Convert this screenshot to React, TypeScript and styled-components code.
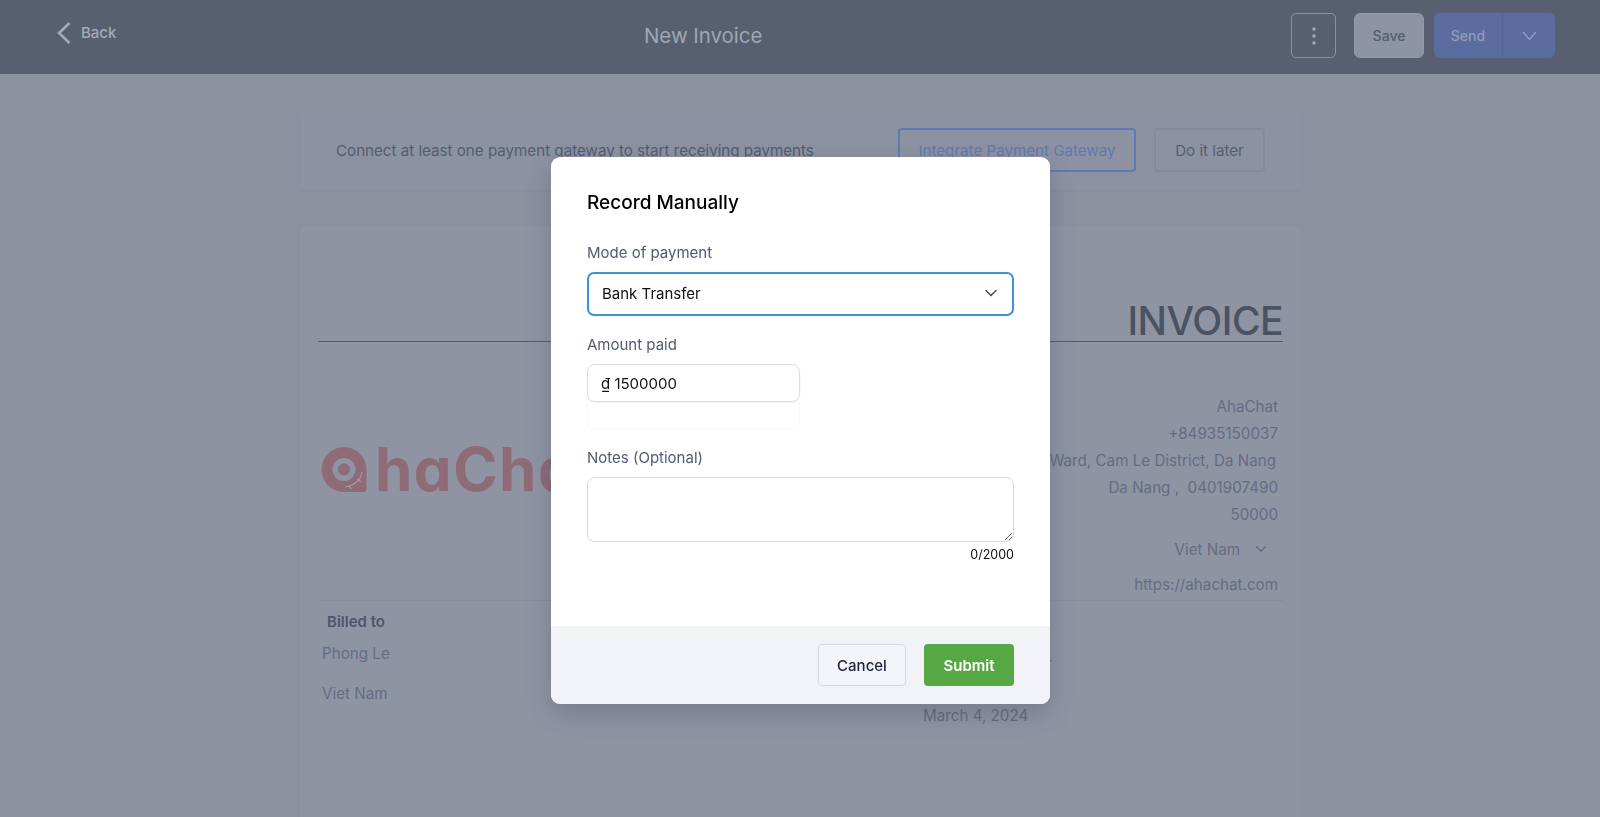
import styled, { createGlobalStyle } from 'styled-components'
import { ChevronDown } from 'lucide-react'

const GlobalStyle = createGlobalStyle`
  html, body {
    margin: 0;
    height: 100%;
    overflow: hidden;
    background: #8c91a0;
    font-family: Inter, "Liberation Sans", sans-serif;
  }
  * {
    box-sizing: border-box;
  }
`

const Page = styled.div`
  height: 817px;
  overflow: hidden;
`

const Header = styled.header`
  height: 74px;
  background: #575f71;
  display: flex;
  align-items: flex-start;
  justify-content: space-between;
  padding: 13px 45px 0 56px;
  position: relative;
`

const BackLink = styled.a`
  display: flex;
  align-items: center;
  gap: 10px;
  height: 40px;
  color: #a5aab6;
  font-size: 15px;
  font-weight: 500;
  line-height: 38px;
`

const PageTitle = styled.h1`
  position: absolute;
  left: 644px;
  top: 22px;
  margin: 0;
  color: #a0a6b3;
  font-size: 20.4px;
  font-weight: 400;
  line-height: 28px;
`

const HeaderActions = styled.div`
  display: flex;
  height: 45px;
`

const KebabButton = styled.button`
  width: 45px;
  height: 45px;
  margin-right: 18px;
  background: transparent;
  border: 1px solid #8a90a0;
  border-radius: 5px;
  display: flex;
  align-items: center;
  justify-content: center;
  padding: 0;
`

const SaveButton = styled.button`
  width: 70px;
  height: 45px;
  margin-right: 10px;
  border: 1px solid #9298a6;
  border-radius: 6px;
  background: #8e94a3;
  color: #555d70;
  font: 500 14px Inter, sans-serif;
`

const SendGroup = styled.div`
  width: 121px;
  height: 45px;
  display: flex;
  border-radius: 6px;
  background: #5b6ca0;
  color: #929cb9;
  font-size: 14px;
  font-weight: 500;
`

const SendLabel = styled.span`
  width: 69px;
  display: flex;
  align-items: center;
  justify-content: center;
  border-right: 1px solid #54659a;
`

const SendCaret = styled.span`
  flex: 1;
  display: flex;
  align-items: center;
  justify-content: center;
`

const Content = styled.main`
  width: 1001px;
  margin: 38px 0 0 300px;
`

const Banner = styled.section`
  height: 78px;
  display: flex;
  align-items: center;
  padding: 0 36px 2px;
  border-radius: 4px;
  background: #8c92a1;
  box-shadow: 0 1px 2px rgba(70, 76, 96, 0.08);
  color: #555c70;
  font-size: 15.15px;
`

const BannerText = styled.span`
  width: 562px;
`

const IntegrateButton = styled.button`
  width: 238px;
  height: 44px;
  margin-right: 18px;
  background: transparent;
  border: 2px solid #5f79b5;
  border-radius: 4px;
  color: #5f79b5;
  font: 400 15.15px Inter, sans-serif;
`

const LaterButton = styled.button`
  width: 111px;
  height: 44px;
  background: transparent;
  border: 2px solid #858a9a;
  border-radius: 4px;
  color: #585f72;
  font: 400 15.15px Inter, sans-serif;
`

const InvoiceCard = styled.section`
  height: 620px;
  margin-top: 36px;
  padding: 0 18px;
  border-radius: 4px;
  background: #8f94a3;
  box-shadow: 0 0 1px rgba(70, 76, 96, 0.2);
`

const InvoiceTitleRow = styled.div`
  height: 116px;
  display: flex;
  align-items: flex-end;
  justify-content: flex-end;
  border-bottom: 1px solid #565d6e;
`

const InvoiceTitle = styled.h2`
  margin: 0;
  color: #4b5262;
  font-size: 39px;
  font-weight: 500;
  line-height: 40px;
  letter-spacing: -0.5px;
`

const SenderRow = styled.div`
  height: 259px;
  display: flex;
  justify-content: space-between;
  border-bottom: 1px solid #888d9c;
`

const Logo = styled.div`
  display: flex;
  align-items: center;
  gap: 8px;
  height: 48px;
  margin: 103px 0 0 3px;
  color: #8f6a77;
  font-size: 60px;
  font-weight: 700;
  font-feature-settings: 'cv11';
  letter-spacing: 1.5px;
  line-height: 48px;
  white-space: nowrap;
`

const Address = styled.div`
  display: flex;
  flex-direction: column;
  align-items: flex-end;
  padding: 52px 5px 0 0;
  color: #656c81;
  font-size: 15.2px;
`

const AddressLine = styled.div<{ $inset?: number }>`
  height: 26.9px;
  line-height: 26.9px;
  padding-right: ${(props) => props.$inset ?? 0}px;
  white-space: nowrap;
`

const CountryLine = styled.div`
  display: flex;
  align-items: center;
  gap: 12px;
  height: 26px;
  margin-top: 8px;
  padding-right: 8px;
`

const WebsiteLine = styled.div`
  height: 26px;
  margin-top: 10px;
  line-height: 26px;
`

const BilledRow = styled.div`
  display: flex;
  padding-top: 11px;
`

const BilledColumn = styled.div`
  width: 605px;
  padding-left: 4px;
  color: #656c81;
  font-size: 15.2px;
`

const BilledHeading = styled.div`
  margin-left: 5px;
  color: #4f566a;
  font-size: 15px;
  font-weight: 600;
  line-height: 20px;
`

const BilledLine = styled.div<{ $gap: number }>`
  margin-top: ${(props) => props.$gap}px;
  line-height: 20px;
`

const MetaColumn = styled.div`
  width: 129px;
  color: #656c81;
  font-size: 15.2px;
`

const MetaNumber = styled.div`
  margin-top: 37px;
  line-height: 20px;
  text-align: right;
`

const MetaDate = styled.div`
  margin-top: 37px;
  line-height: 20px;
`

const Backdrop = styled.div`
  position: fixed;
  inset: 0;
  display: flex;
  justify-content: center;
  align-items: flex-start;
  padding: 157px 0 0 1px;
`

const Modal = styled.div`
  width: 499px;
  height: 547px;
  display: flex;
  flex-direction: column;
  overflow: hidden;
  background: #fff;
  border-radius: 9px;
  box-shadow: 0 10px 24px rgba(50, 56, 76, 0.25);
`

const ModalBody = styled.div`
  flex: 1;
  display: flex;
  flex-direction: column;
  padding: 34px 36px 0;
`

const ModalTitle = styled.h3`
  margin: 0;
  color: #000;
  font-size: 19px;
  font-weight: 500;
  line-height: 24px;
`

const FieldLabel = styled.label<{ $top: number }>`
  display: block;
  margin-top: ${(props) => props.$top}px;
  color: #505a76;
  font-size: 15px;
  line-height: 20px;
`

const SelectBox = styled.div`
  height: 44px;
  margin-top: 9px;
  display: flex;
  align-items: center;
  justify-content: space-between;
  padding: 0 11px 2px 13px;
  border: 2px solid #3b93dc;
  border-radius: 7px;
  color: #111;
  font-size: 15px;
`

const AmountBox = styled.div`
  width: 213px;
  height: 38px;
  margin-top: 9px;
  display: flex;
  align-items: center;
  padding: 0 13px;
  border: 1px solid #dcdce3;
  border-radius: 8px;
  box-shadow: 0 1px 2px rgba(60, 60, 90, 0.08);
  color: #111;
  font-size: 15px;
`

const AmountGhost = styled.div`
  width: 213px;
  height: 27px;
  border: 1px solid #f8f8fa;
  border-top: 0;
  border-radius: 0 0 6px 6px;
`

const NotesBox = styled.textarea`
  display: block;
  width: 100%;
  height: 65px;
  margin: 9px 0 0;
  border: 1px solid #d8d8e0;
  border-radius: 8px;
  background: #fff;
  outline: none;
`

const Counter = styled.div`
  margin-top: 5px;
  color: #111;
  font-size: 12.5px;
  line-height: 16px;
  text-align: right;
`

const ModalFooter = styled.div`
  height: 78px;
  display: flex;
  justify-content: flex-end;
  gap: 18px;
  padding: 18px 36px 0;
  background: #f2f3f7;
`

const CancelButton = styled.button`
  width: 88px;
  height: 42px;
  border: 1px solid #d8d9df;
  border-radius: 4px;
  background: #f4f5f8;
  color: #1b2140;
  font: 500 15px Inter, sans-serif;
`

const SubmitButton = styled.button`
  width: 90px;
  height: 42px;
  border: 0;
  border-radius: 4px;
  background: #56a844;
  color: #fff;
  font: 600 15px Inter, sans-serif;
`

function LogoMark() {
  return (
    <svg width="46" height="45" viewBox="0 0 46 45">
      <path d="M23 0a22.5 22.5 0 0 1 22.5 22.5V42a3 3 0 0 1-3 3H23A22.5 22.5 0 0 1 23 0z" fill="#8f6a77" />
      <circle cx="23" cy="22.5" r="8.75" fill="none" stroke="#8f94a3" strokeWidth="5.5" />
      <path d="M41 25c-1 8-8 14-17 15M36 32l4 3M28 38l2 4" fill="none" stroke="#a59aa3" strokeWidth="1.2" />
    </svg>
  )
}

export default function App() {
  return (
    <Page>
      <GlobalStyle />
      <Header>
        <BackLink>
          <svg width="15" height="22" viewBox="0 0 15 22">
            <polyline points="13.5,1 3,11 13.5,21" fill="none" stroke="#a5aab6" strokeWidth="2.6" />
          </svg>
          Back
        </BackLink>
        <PageTitle>New Invoice</PageTitle>
        <HeaderActions>
          <KebabButton aria-label="More">
            <svg width="4" height="20" viewBox="0 0 4 20">
              <circle cx="2" cy="3" r="1.7" fill="#a5aab6" />
              <circle cx="2" cy="10" r="1.7" fill="#a5aab6" />
              <circle cx="2" cy="17" r="1.7" fill="#a5aab6" />
            </svg>
          </KebabButton>
          <SaveButton>Save</SaveButton>
          <SendGroup>
            <SendLabel>Send</SendLabel>
            <SendCaret>
              <svg width="15" height="10" viewBox="0 0 15 10">
                <polyline points="1,1 7.5,8.5 14,1" fill="none" stroke="#929cb9" strokeWidth="1.4" />
              </svg>
            </SendCaret>
          </SendGroup>
        </HeaderActions>
      </Header>

      <Content>
        <Banner>
          <BannerText>Connect at least one payment gateway to start receiving payments</BannerText>
          <IntegrateButton>Integrate Payment Gateway</IntegrateButton>
          <LaterButton>Do it later</LaterButton>
        </Banner>

        <InvoiceCard>
          <InvoiceTitleRow>
            <InvoiceTitle>INVOICE</InvoiceTitle>
          </InvoiceTitleRow>

          <SenderRow>
            <Logo>
              <LogoMark />
              haChat
            </Logo>
            <Address>
              <AddressLine>AhaChat</AddressLine>
              <AddressLine>+84935150037</AddressLine>
              <AddressLine $inset={2}>Hoa Tho Dong Ward, Cam Le District, Da Nang</AddressLine>
              <AddressLine>Da Nang ,&nbsp; 0401907490</AddressLine>
              <AddressLine>50000</AddressLine>
              <CountryLine>
                Viet Nam
                <ChevronDown size={18} strokeWidth={1.6} color="#656c81" />
              </CountryLine>
              <WebsiteLine>https://ahachat.com</WebsiteLine>
            </Address>
          </SenderRow>

          <BilledRow>
            <BilledColumn>
              <BilledHeading>Billed to</BilledHeading>
              <BilledLine $gap={12}>Phong Le</BilledLine>
              <BilledLine $gap={20}>Viet Nam</BilledLine>
            </BilledColumn>
            <MetaColumn>
              <MetaNumber>INV-0000004</MetaNumber>
              <MetaDate>March 4, 2024</MetaDate>
            </MetaColumn>
          </BilledRow>
        </InvoiceCard>
      </Content>

      <Backdrop>
        <Modal>
          <ModalBody>
            <ModalTitle>Record Manually</ModalTitle>
            <FieldLabel $top={28}>Mode of payment</FieldLabel>
            <SelectBox>
              Bank Transfer
              <ChevronDown size={20} strokeWidth={1.6} color="#444" />
            </SelectBox>
            <FieldLabel $top={19}>Amount paid</FieldLabel>
            <AmountBox>₫ 1500000</AmountBox>
            <AmountGhost />
            <FieldLabel $top={19}>Notes (Optional)</FieldLabel>
            <NotesBox />
            <Counter>0/2000</Counter>
          </ModalBody>
          <ModalFooter>
            <CancelButton>Cancel</CancelButton>
            <SubmitButton>Submit</SubmitButton>
          </ModalFooter>
        </Modal>
      </Backdrop>
    </Page>
  )
}
